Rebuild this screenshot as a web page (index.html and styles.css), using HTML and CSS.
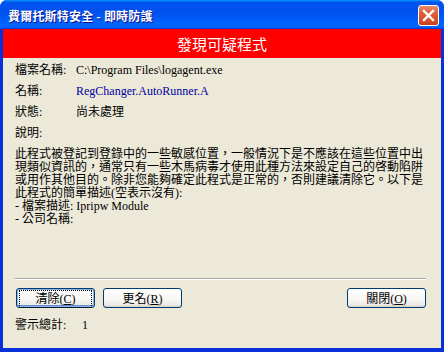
FILE: index.html
```html
<!DOCTYPE html>
<html lang="zh-Hant">
<head>
    <meta charset="UTF-8">
    <title>費爾托斯特安全 - 即時防護</title>
    <link rel="stylesheet" href="styles.css">
</head>
<body>

    <div class="window">
        <div class="title-bar">
            <span class="title-text">費爾托斯特安全 - 即時防護</span>
            <div class="close-btn">
                <svg width="13" height="13" viewBox="0 0 13 13"><path d="M2 2 L11 11 M11 2 L2 11" stroke="#fff" stroke-width="2.4" stroke-linecap="square"/></svg>
            </div>
        </div>

        <div class="frame">
            <div class="banner">發現可疑程式</div>

            <div class="content">
                <div class="row"><span class="label">檔案名稱:</span><span class="value">C:\Program Files\logagent.exe</span></div>
                <div class="row"><span class="label">名稱:</span><span class="value link">RegChanger.AutoRunner.A</span></div>
                <div class="row"><span class="label">狀態:</span><span class="value">尚未處理</span></div>
                <div class="row"><span class="label">說明:</span></div>

                <p class="desc">此程式被登記到登錄中的一些敏感位置，一般情況下是不應該在這些位置中出<br>現類似資訊的，通常只有一些木馬病毒才使用此種方法來設定自己的啓動陷阱<br>或用作其他目的。除非您能夠確定此程式是正常的，否則建議清除它。以下是<br>此程式的簡單描述(空表示沒有):<br>- 檔案描述: Ipripw Module<br>- 公司名稱:</p>

                <div class="separator"></div>

                <div class="buttons">
                    <button class="btn focused"><span>清除(<u>C</u>)</span></button>
                    <button class="btn">更名(<u>R</u>)</button>
                    <button class="btn right">關閉(<u>O</u>)</button>
                </div>

                <div class="total"><span class="label">警示總計:</span><span>1</span></div>
            </div>
        </div>
    </div>

</body>
</html>
```

FILE: styles.css
```css
:root { --face: #ece9d8; --xp-blue: #0831d9; --font: "Liberation Serif", "Noto Sans CJK TC", serif; }
body { margin: 0; background: #fff; font-family: var(--font); font-size: 12px; color: #000; }

.window { width: 444px; height: 352px; box-sizing: border-box; display: flex; flex-direction: column; background: var(--xp-blue); border-radius: 7px 7px 0 0; overflow: hidden; }

/* TITLE BAR */
.title-bar {
    height: 29px; flex: none; display: flex; align-items: center; justify-content: space-between;
    padding: 0 5px 0 8px; box-sizing: border-box;
    background: linear-gradient(to bottom, #0997ff 0%, #0053ee 8%, #0050ee 40%, #0066ff 88%, #0066ff 93%, #005bff 95%, #003dd7 96%, #003dd7 100%);
}
.title-text { color: #fff; font-family: "Noto Sans CJK TC", sans-serif; font-weight: 700; font-size: 12px; letter-spacing: 0.2px; text-shadow: 1px 1px 0 #0f1089; margin-top: 2px; }
.close-btn {
    width: 21px; height: 21px; box-sizing: border-box; border: 1px solid #fff; border-radius: 3px;
    background: radial-gradient(circle at 90% 90%, #cc4600 0%, #dc6527 55%, #cd7546 70%, #ffccb2 90%, #fff 100%);
    background: linear-gradient(to bottom, #e98a6c 0%, #e0613c 35%, #d64b25 80%, #c24020 100%);
    display: flex; align-items: center; justify-content: center; margin-top: 2px;
}

/* BODY FRAME */
.frame { flex: 1; margin: 0 3px 4px 3px; background: var(--face); display: flex; flex-direction: column; }
.banner { height: 29px; background: #ff0000; color: #fff; font-family: "Noto Sans CJK TC", sans-serif; font-size: 15px; display: flex; align-items: center; justify-content: center; }

.content { padding: 2px 15px 0 12px; display: flex; flex-direction: column; }
.row { display: flex; height: 21px; line-height: 21px; }
.label { width: 61px; flex: none; }
.link { color: #0000a0; }

.desc { margin: 4px 0 0 0; line-height: 13px; white-space: nowrap; }

.separator { margin: 52px 0 0 0; height: 1px; background: #aca899; border-bottom: 1px solid #fff; width: 411px; }

.buttons { display: flex; margin-top: 8px; padding-left: 1px; gap: 8px; }
.btn {
    width: 79px; height: 20px; box-sizing: border-box; padding: 0; font-family: var(--font); font-size: 12px; color: #000;
    border: 1px solid #003c74; border-radius: 3px;
    background: linear-gradient(to bottom, #fff 0%, #f6f6f3 60%, #ecebe6 86%, #d6d0c5 100%);
}
.btn u { text-decoration: underline; }
.btn.right { margin-left: auto; }
.btn.focused { box-shadow: inset 0 0 0 1px #88b0e8, inset 0 -1px 0 1px #6b8fd0; }
.btn.focused span { outline: 1px dotted #000; outline-offset: 1px; padding: 0 14px; }

.total { display: flex; margin-top: 11px; line-height: 13px; }
.total .label { width: 67px; }
```
